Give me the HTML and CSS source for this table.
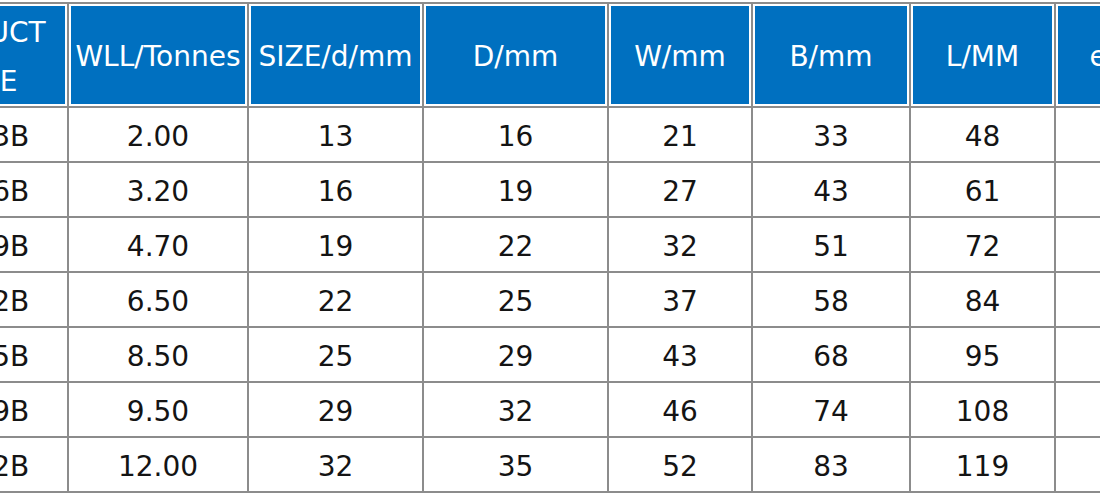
FILE: index.html
```html
<!DOCTYPE html>
<html lang="en">
<head>
    <meta charset="UTF-8">
    <title>Specification Table</title>
    <link rel="stylesheet" href="styles.css">
</head>
<body>
    <div class="sheet">
        <table class="spec">
            <colgroup>
                <col class="c-code">
                <col class="c-wll">
                <col class="c-size">
                <col class="c-d">
                <col class="c-w">
                <col class="c-b">
                <col class="c-l">
                <col class="c-e">
            </colgroup>
            <thead>
                <tr>
                    <th class="code-head">PRODUCT<br>CODE</th>
                    <th>WLL/Tonnes</th>
                    <th>SIZE/d/mm</th>
                    <th>D/mm</th>
                    <th>W/mm</th>
                    <th>B/mm</th>
                    <th>L/MM</th>
                    <th>e/mm</th>
                </tr>
            </thead>
            <tbody>
                <tr><td>G8-13B</td><td>2.00</td><td>13</td><td>16</td><td>21</td><td>33</td><td>48</td><td>6</td></tr>
                <tr><td>G8-16B</td><td>3.20</td><td>16</td><td>19</td><td>27</td><td>43</td><td>61</td><td>8</td></tr>
                <tr><td>G8-19B</td><td>4.70</td><td>19</td><td>22</td><td>32</td><td>51</td><td>72</td><td>9</td></tr>
                <tr><td>G8-22B</td><td>6.50</td><td>22</td><td>25</td><td>37</td><td>58</td><td>84</td><td>11</td></tr>
                <tr><td>G8-25B</td><td>8.50</td><td>25</td><td>29</td><td>43</td><td>68</td><td>95</td><td>12</td></tr>
                <tr><td>G8-29B</td><td>9.50</td><td>29</td><td>32</td><td>46</td><td>74</td><td>108</td><td>14</td></tr>
                <tr><td>G8-32B</td><td>12.00</td><td>32</td><td>35</td><td>52</td><td>83</td><td>119</td><td>16</td></tr>
            </tbody>
        </table>
    </div>
</body>
</html>
```

FILE: styles.css
```css
body {
    margin: 0;
    background: #fff;
    font-family: 'DejaVu Sans', Verdana, sans-serif;
}

.sheet {
    width: 1100px;
    height: 500px;
    overflow: hidden;
}

.spec {
    border-collapse: collapse;
    table-layout: fixed;
    width: 1319px;
    margin: 2px 0 0 -115px;
    font-size: 28px;
    color: #141414;
}

.c-code { width: 182px; }
.c-wll { width: 180px; }
.c-size { width: 175px; }
.c-d { width: 185px; }
.c-w { width: 144px; }
.c-b { width: 158px; }
.c-l { width: 145px; }
.c-e { width: 150px; }

.spec th,
.spec td {
    border: 2px solid #8c8c8c;
    text-align: center;
    white-space: nowrap;
    padding: 0;
}

.spec th {
    height: 104px;
    padding-top: 3px;
    box-sizing: border-box;
    background: #0070c0;
    color: #fff;
    font-weight: normal;
    box-shadow: inset 0 0 0 2px #fff;
}

.spec th.code-head {
    vertical-align: top;
    padding-top: 4px;
    line-height: 49px;
}

.spec td {
    height: 55px;
    box-sizing: border-box;
    padding-top: 3px;
}
```
